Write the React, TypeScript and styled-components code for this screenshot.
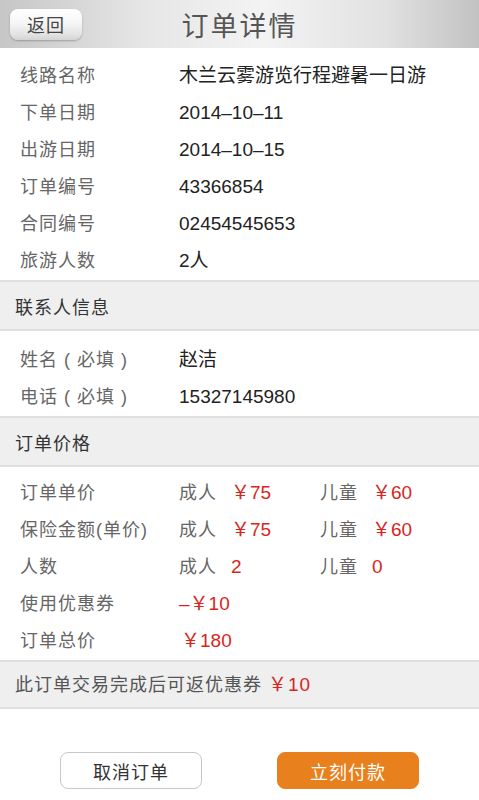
import React from 'react';
import styled, { createGlobalStyle } from 'styled-components';

const GlobalStyle = createGlobalStyle`
  body {
    margin: 0;
    background: #fff;
    font-family: "Liberation Sans", "Noto Sans CJK SC", sans-serif;
  }
`;

const Page = styled.div`
  width: 479px;
  height: 800px;
  display: flex;
  flex-direction: column;
  background: #fff;
  overflow: hidden;
`;

// top bar
const Header = styled.div`
  height: 48px;
  display: grid;
  grid-template-columns: 1fr auto 1fr;
  align-items: center;
  background: linear-gradient(to right, #c6c6c6 0%, #e6e6e6 30%, #f3f3f3 55%, #e2e2e2 80%, #c2c2c2 100%);
  box-sizing: border-box;
`;

const BackButton = styled.button`
  justify-self: start;
  margin-left: 10px;
  width: 72px;
  height: 31px;
  border: none;
  border-radius: 8px;
  background: linear-gradient(to bottom, #ffffff 0%, #f6f6f6 45%, #e4e4e4 80%, #d4d4d4 100%);
  box-shadow: 0 1px 2px rgba(0, 0, 0, 0.25);
  font-family: "Noto Sans CJK SC", sans-serif;
  font-size: 18px;
  letter-spacing: 1px;
  color: #444;
  padding: 0;
`;

const Title = styled.div`
  font-family: "Noto Sans CJK SC", sans-serif;
  font-size: 27px;
  letter-spacing: 2px;
  color: #555;
`;

const Section = styled.div<{ $top?: number }>`
  padding: ${(p) => p.$top ?? 9}px 0 1px;
`;

const Row = styled.div`
  height: 37px;
  line-height: 37px;
  display: grid;
  grid-template-columns: 159px 141px 1fr;
  align-items: baseline;
  padding-left: 20px;
`;

const Label = styled.span`
  font-size: 18px;
  letter-spacing: 1px;
  color: #666;
  white-space: nowrap;
`;

const Value = styled.span`
  font-size: 19px;
  color: #222;
  white-space: nowrap;
`;

const Cell = styled.span`
  display: flex;
  align-items: baseline;
  white-space: nowrap;
`;

const Tag = styled.span`
  font-size: 18px;
  color: #666;
  letter-spacing: 1px;
  margin-right: 14px;
`;

const Price = styled.span<{ $indent?: number }>`
  font-size: 19px;
  color: #d7261d;
  padding-left: ${(p) => p.$indent ?? 0}px;
`;

const Bar = styled.div<{ $height?: number }>`
  height: ${(p) => p.$height ?? 51}px;
  box-sizing: border-box;
  display: flex;
  align-items: center;
  padding-left: 15px;
  background: #efefef;
  border-top: 2px solid #e0e0e0;
  border-bottom: 2px solid #e0e0e0;
  font-size: 18px;
  letter-spacing: 1px;
  color: #333;
`;

const BarNote = styled(Bar)`
  color: #555;
  align-items: baseline;
  line-height: 45px;
`;

const Footer = styled.div`
  display: flex;
  gap: 75px;
  padding: 43px 0 0 60px;
`;

const ActionButton = styled.button<{ $primary?: boolean }>`
  width: 142px;
  height: 37px;
  border-radius: 8px;
  box-sizing: border-box;
  border: 1px solid ${(p) => (p.$primary ? '#e8801e' : '#c8c8c8')};
  background: ${(p) => (p.$primary ? '#e8801e' : '#fff')};
  color: ${(p) => (p.$primary ? '#fff' : '#333')};
  font-family: "Noto Sans CJK SC", sans-serif;
  font-size: 18px;
  letter-spacing: 1px;
  padding: 0;
`;

const orderInfo = [
  { label: '线路名称', value: '木兰云雾游览行程避暑一日游' },
  { label: '下单日期', value: '2014–10–11' },
  { label: '出游日期', value: '2014–10–15' },
  { label: '订单编号', value: '43366854' },
  { label: '合同编号', value: '02454545653' },
  { label: '旅游人数', value: '2人' },
];

const contacts = [
  { label: '姓名 ( 必填 )', value: '赵洁' },
  { label: '电话 ( 必填 )', value: '15327145980' },
];

const prices = [
  { label: '订单单价', adult: '￥75', child: '￥60' },
  { label: '保险金额(单价)', adult: '￥75', child: '￥60' },
  { label: '人数', adult: '2', child: '0' },
];

const App: React.FC = () => {
  return (
    <>
      <GlobalStyle />
      <Page>
        <Header>
          <BackButton>返回</BackButton>
          <Title>订单详情</Title>
          <span />
        </Header>

        <Section>
          {orderInfo.map((item) => (
            <Row key={item.label}>
              <Label>{item.label}</Label>
              <Value>{item.value}</Value>
            </Row>
          ))}
        </Section>

        <Bar>联系人信息</Bar>

        <Section $top={10}>
          {contacts.map((item) => (
            <Row key={item.label}>
              <Label>{item.label}</Label>
              <Value>{item.value}</Value>
            </Row>
          ))}
        </Section>

        <Bar>订单价格</Bar>

        <Section $top={7}>
          {prices.map((item) => (
            <Row key={item.label}>
              <Label>{item.label}</Label>
              <Cell>
                <Tag>成人</Tag>
                <Price>{item.adult}</Price>
              </Cell>
              <Cell>
                <Tag>儿童</Tag>
                <Price>{item.child}</Price>
              </Cell>
            </Row>
          ))}
          <Row>
            <Label>使用优惠券</Label>
            <Price>–￥10</Price>
          </Row>
          <Row>
            <Label>订单总价</Label>
            <Price $indent={2}>￥180</Price>
          </Row>
        </Section>

        <BarNote $height={49}>
          此订单交易完成后可返优惠券&nbsp;<Price>￥10</Price>
        </BarNote>

        <Footer>
          <ActionButton>取消订单</ActionButton>
          <ActionButton $primary>立刻付款</ActionButton>
        </Footer>
      </Page>
    </>
  );
};

export default App;
